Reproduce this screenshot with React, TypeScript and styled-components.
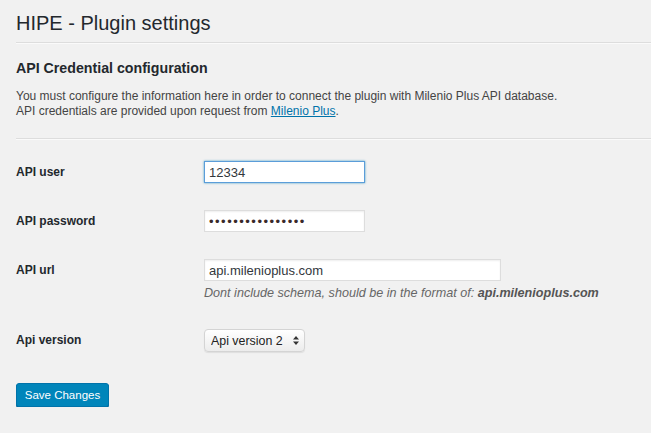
import React from "react";
import styled, { createGlobalStyle } from "styled-components";

const GlobalStyle = createGlobalStyle`
  body {
    margin: 0;
    background: #f1f1f1;
    color: #444;
    font-family: "Liberation Sans", Arial, sans-serif;
    font-size: 12px;
  }
`;

const Wrap = styled.div`
  padding-left: 16px;
`;

const Title = styled.h1`
  margin: 0;
  padding: 9px 0 4px;
  font-size: 20px;
  line-height: 29px;
  font-weight: 400;
  color: #23282d;
`;

const Divider = styled.hr`
  margin: 0;
  border: 0;
  border-top: 1px solid #ddd;
  border-bottom: 1px solid #fafafa;
`;

const SectionTitle = styled.h2`
  margin: 14px 0 0;
  font-size: 14.2px;
  line-height: 20px;
  font-weight: 700;
  color: #23282d;
`;

const Intro = styled.p`
  margin: 11px 0 19px;
  font-size: 12px;
  line-height: 15px;
`;

const Link = styled.a`
  color: #0073aa;
  text-decoration: underline;
`;

const FormTable = styled.div`
  display: grid;
  padding-top: 8px;
`;

const FieldRow = styled.div`
  display: grid;
  grid-template-columns: 188px 1fr;
  align-items: start;
  padding: 13px 0 14px;
`;

const Label = styled.label`
  font-size: 12px;
  font-weight: 700;
  line-height: 22px;
  color: #23282d;
`;

const TextInput = styled.input<{ $width: number; $focused?: boolean }>`
  display: block;
  box-sizing: border-box;
  width: ${(p) => p.$width}px;
  height: 22px;
  margin: 0;
  padding: 0 4px;
  border: 1px solid ${(p) => (p.$focused ? "#5b9dd9" : "#ddd")};
  box-shadow: ${(p) =>
    p.$focused
      ? "0 0 2px rgba(30, 140, 190, 0.8)"
      : "inset 0 1px 2px rgba(0, 0, 0, 0.07)"};
  background: #fff;
  color: #32373c;
  font-family: "Liberation Sans", Arial, sans-serif;
  font-size: 13px;
  outline: none;
`;

const PasswordInput = styled(TextInput)`
  letter-spacing: 1.5px;
  color: #3a2a2a;
`;

const Description = styled.p`
  margin: 4px 0 0;
  font-size: 12.6px;
  line-height: 17px;
  font-style: italic;
  color: #666;

  strong {
    color: #555;
  }
`;

const SelectWrap = styled.div`
  position: relative;
  width: 101px;
`;

const Select = styled.select`
  display: block;
  box-sizing: border-box;
  width: 101px;
  height: 23px;
  margin: 0;
  padding: 0 0 0 6px;
  appearance: none;
  border: 1px solid #d4d4d4;
  border-radius: 4px;
  background: linear-gradient(#fff, #ececec);
  box-shadow: 0 1px 1px rgba(0, 0, 0, 0.08);
  color: #222;
  font-family: "Liberation Sans", Arial, sans-serif;
  font-size: 12.4px;
  outline: none;
`;

const Arrows = styled.svg`
  position: absolute;
  top: 7px;
  right: 6px;
  pointer-events: none;
`;

const Submit = styled.button`
  margin-top: 17px;
  height: 24px;
  width: 93px;
  padding: 0;
  border: 1px solid #0073aa;
  border-radius: 3px;
  background: #0085ba;
  box-shadow: 0 1px 0 #006799;
  color: #fff;
  font-family: "Liberation Sans", Arial, sans-serif;
  font-size: 11.5px;
  cursor: pointer;
`;

export default function App() {
  return (
    <>
      <GlobalStyle />
      <Wrap>
        <Title>HIPE - Plugin settings</Title>
        <Divider />
        <SectionTitle>API Credential configuration</SectionTitle>
        <Intro>
          You must configure the information here in order to connect the plugin with Milenio
          Plus API database.
          <br />
          API credentials are provided upon request from <Link href="#">Milenio Plus</Link>.
        </Intro>
        <Divider />
        <FormTable>
          <FieldRow>
            <Label htmlFor="api-user">API user</Label>
            <TextInput id="api-user" $width={161} $focused defaultValue="12334" />
          </FieldRow>
          <FieldRow>
            <Label htmlFor="api-password">API password</Label>
            <PasswordInput
              id="api-password"
              type="password"
              $width={161}
              defaultValue="mileniopluspass1"
            />
          </FieldRow>
          <FieldRow>
            <Label htmlFor="api-url">API url</Label>
            <div>
              <TextInput id="api-url" $width={297} defaultValue="api.milenioplus.com" />
              <Description>
                Dont include schema, should be in the format of: <strong>api.milenioplus.com</strong>
              </Description>
            </div>
          </FieldRow>
          <FieldRow>
            <Label htmlFor="api-version">Api version</Label>
            <SelectWrap>
              <Select id="api-version" defaultValue="2">
                <option value="1">Api version 1</option>
                <option value="2">Api version 2</option>
              </Select>
              <Arrows width="6" height="9" viewBox="0 0 6 9">
                <path d="M3 0 L6 3.5 L0 3.5 Z M0 5.5 L6 5.5 L3 9 Z" fill="#333" />
              </Arrows>
            </SelectWrap>
          </FieldRow>
        </FormTable>
        <Submit type="button">Save Changes</Submit>
      </Wrap>
    </>
  );
}
